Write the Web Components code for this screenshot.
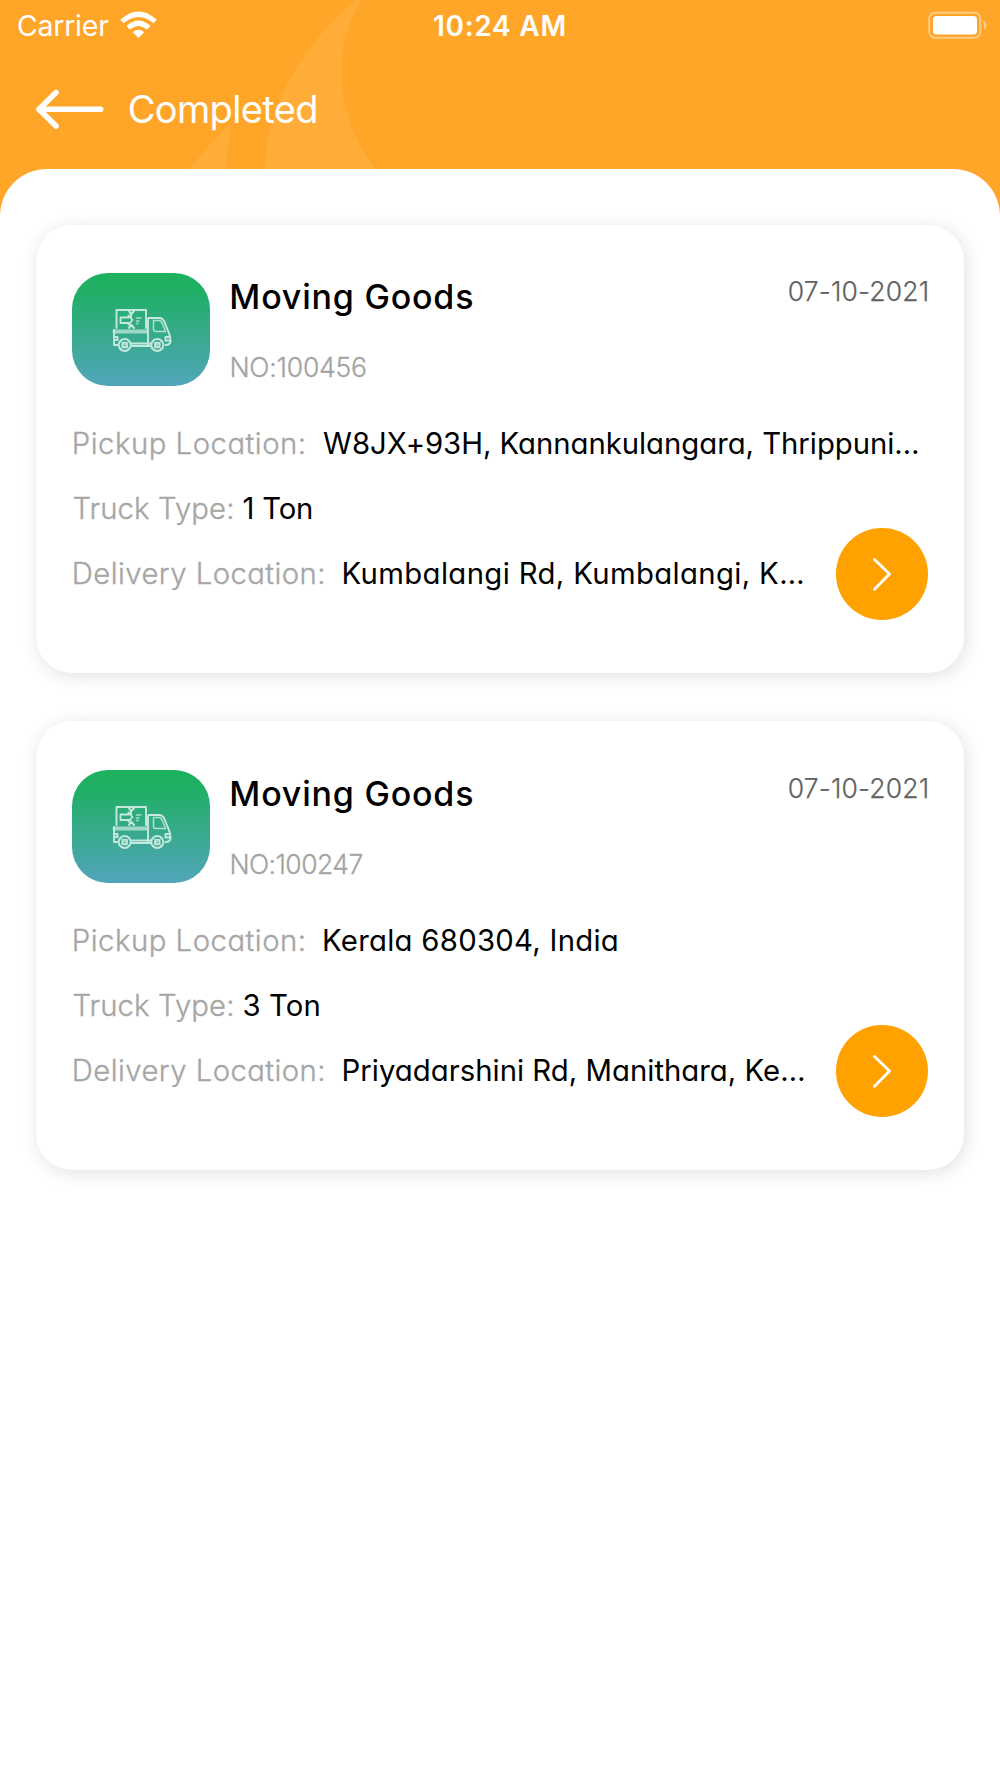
<!DOCTYPE html>
<html lang="en">
<head>
<meta charset="utf-8">
<title>Completed</title>
<style>
html,body{margin:0;background:#fff}
body{font-family:Inter,"Liberation Sans",sans-serif}
</style>
</head>
<body>
<app-screen>
  <status-bar slot="header"></status-bar>
  <nav-bar slot="header" label="Completed" ink="187.5"></nav-bar>
  <order-card name="Moving Goods" number="NO:100456" number-ink="134.5" date="07-10-2021"
    pickup="W8JX+93H, Kannankulangara, Thrippuni…" pickup-ink="595"
    truck="1 Ton" truck-ink="68"
    delivery="Kumbalangi Rd, Kumbalangi, K…" delivery-ink="459.5"></order-card>
  <order-card name="Moving Goods" number="NO:100247" number-ink="131" date="07-10-2021"
    pickup="Kerala 680304, India" pickup-ink="293"
    truck="3 Ton" truck-ink="75.5"
    delivery="Priyadarshini Rd, Manithara, Ke…" delivery-ink="460.5"></order-card>
</app-screen>
<script>
const pen = document.createElement('canvas').getContext('2d');

/* One line of text, tracked so that its glyphs span exactly `ink` pixels. */
class FitText extends HTMLElement {
  connectedCallback() {
    const root = this.attachShadow({mode: 'open'});
    root.innerHTML = `<style>
      :host{display:block;flex:none;white-space:pre}
      span{display:inline-block;font-kerning:normal}
    </style><span></span>`;
    const span = root.querySelector('span');
    const text = this.getAttribute('text');
    const ink = parseFloat(this.getAttribute('ink'));
    span.textContent = text;
    const cs = getComputedStyle(span);
    /* Side bearings are read at ten times the size, since they come back in whole pixels. */
    pen.font = `${cs.fontWeight} ${parseFloat(cs.fontSize) * 10}px ${cs.fontFamily}`;
    const first = pen.measureText(text[0]);
    const last = pen.measureText(text[text.length - 1]);
    const left = -first.actualBoundingBoxLeft / 10;
    const right = (last.width - last.actualBoundingBoxRight) / 10;
    const natural = span.getBoundingClientRect().width - left - right;
    span.style.letterSpacing = (ink - 0.8 - natural) / (text.length - 1) + 'px';
    span.style.marginLeft = -0.55 * left - 0.4 + 'px';
    this.style.width = ink + 'px';
  }
}

class AppScreen extends HTMLElement {
  constructor() {
    super();
    this.attachShadow({mode: 'open'}).innerHTML = `<style>
      :host{display:flex;flex-direction:column;width:1000px;height:1778px;background:#ffa528;overflow:hidden;position:relative}
      .art{position:absolute;left:0;top:0}
      header{position:relative;height:169px;flex:none}
      main{position:relative;flex:1;box-sizing:border-box;background:#fff;border-radius:47px 47px 0 0;padding:55.500px 36px 0;display:flex;flex-direction:column;gap:48.700px}
    </style>
    <svg class="art" width="1000" height="220" viewBox="0 0 1000 220" fill="#ffac38">
      <path d="M356 0H362C346 24 341 50 342 78C343 112 355 141 375 169V180H265C264 153 267 132 276 110C290 70 317 33 356 0Z"/>
      <path d="M189 169C202 153 217 137 231 123C229 138 227 153 226.500 169V180H180Z"/>
    </svg>
    <header><slot name="header"></slot></header>
    <main><slot></slot></main>`;
  }
}

class StatusBar extends HTMLElement {
  constructor() {
    super();
    this.attachShadow({mode: 'open'}).innerHTML = `<style>
      :host{display:grid;grid-template-columns:1fr auto 1fr;height:50px;line-height:51px;font-size:28.500px;color:#fff;padding:0 13px 0 18px}
      .left,.right{display:flex;align-items:center}
      .left{gap:11px}.right{justify-content:flex-end}
      .time{font-size:28px;font-weight:560;transform:translate(-3px,1px)}
      svg{display:block}
      .wifi{margin-top:-3px}.battery{margin-top:-1px}
    </style>
    <div class="left"><fit-text text="Carrier" ink="91"></fit-text>
      <svg class="wifi" width="37" height="27" viewBox="120 10 37 27" fill="#fff">
        <path d="M120.300 18.800Q138.500 2 156.800 18.800L153.300 22.300Q138.500 9.500 123.700 22.300Z"/>
        <path d="M126.500 25Q138.500 14 150.500 25L147 28.500Q138.500 21.500 130 28.500Z"/>
        <path d="M132.800 31.200Q138.500 26.500 144.200 31.200L138.500 36.900Z"/>
      </svg></div>
    <fit-text class="time" text="10:24 AM" ink="131.500"></fit-text>
    <div class="right"><svg class="battery" width="59" height="28" viewBox="928 10 59 28">
        <rect x="929.200" y="11.800" width="51.200" height="25" rx="6" fill="none" stroke="#ffcb83" stroke-width="2"/>
        <rect x="933" y="15" width="44" height="18.500" rx="3.500" fill="#fff"/>
        <path d="M983.700 19.500Q989.500 24.300 983.700 29Z" fill="#ffcb83"/>
      </svg></div>`;
  }
}

class NavBar extends HTMLElement {
  connectedCallback() {
    this.attachShadow({mode: 'open'}).innerHTML = `<style>
      :host{display:flex;align-items:center;height:119px;padding-left:36px;gap:25px;color:#fff;font-size:38px;line-height:119px;font-weight:400}
      svg{display:block;margin-top:-2px}
    </style>
    <svg width="68" height="40" viewBox="36 88.500 68 40" fill="none" stroke="#fff" stroke-width="5.600" stroke-linecap="round" stroke-linejoin="round">
      <path d="M56 92L39 108.700L56 125.500M39 108.700H100.700"/>
    </svg>
    <fit-text text="${this.getAttribute('label')}" ink="${this.getAttribute('ink')}"></fit-text>`;
  }
}

class TruckBadge extends HTMLElement {
  constructor() {
    super();
    this.attachShadow({mode: 'open'}).innerHTML = `<style>
      :host{display:block;flex:none;width:137.500px;height:113.500px;border-radius:36px;background:linear-gradient(#1db15e 0%,#22ae69 20%,#52a5bb 100%)}
      svg{display:block}
    </style>
    <svg width="137.500" height="114" viewBox="72.500 273 137.500 114" fill="none" stroke="#c5e9dd" stroke-width="1.900" stroke-linecap="round" stroke-linejoin="round">
      <path d="M117 328V310H146.500V328"/>
      <path d="M129.500 311L131.500 314.500L134.500 311M131.500 314V317M129.500 328L131.500 324.500L134.500 328" stroke-width="2"/>
      <path d="M121 317.500H129V315.500L133 320L129 324.500V323H121Z" stroke-width="1.800"/>
      <path d="M137 318H141.500M137 321H139.500M137 323.500H138.500" stroke-width="1.500" opacity=".8"/>
      <path d="M115 331.500H147" stroke="#9ed9c8" stroke-width="4"/>
      <path d="M114.500 330V345H118M148.500 319V345M132 343.500H151.500M132 346H151.500"/>
      <path d="M149 318H160Q163 318 165 322L169 332Q171 336 171 341Q171 345 166 345"/>
      <path d="M154 320.500H160Q162 321 163.500 325L166 331.500H156Q154 331.500 154 329.500Z" stroke-width="1.500" opacity=".85"/>
      <path d="M115 337H118V340H115M170 337H166V340.500H171" stroke-width="2"/>
      <circle cx="125.200" cy="345" r="6"/><circle cx="125.200" cy="345" r="2.400"/>
      <circle cx="157.800" cy="345" r="6"/><circle cx="157.800" cy="345" r="2.400"/>
      <path d="M122 342L128.500 348M128.500 342L122 348M154.600 342L161 348M161 342L154.600 348" stroke-width="1.200" opacity=".7"/>
    </svg>`;
  }
}

class RoundButton extends HTMLElement {
  constructor() {
    super();
    this.attachShadow({mode: 'open'}).innerHTML = `<style>
      :host{display:block;width:91.500px;height:91.500px;border-radius:50%;background:#ffa200}
      svg{display:block}
    </style>
    <svg width="91.500" height="91.500" viewBox="0 0 91.500 91.500" fill="none" stroke="#fff" stroke-width="2.800" stroke-linecap="round" stroke-linejoin="round"><path d="M38.500 31.400L53.500 46L38.500 61.200"/></svg>`;
  }
}

class OrderCard extends HTMLElement {
  connectedCallback() {
    const a = n => this.getAttribute(n);
    this.attachShadow({mode: 'open'}).innerHTML = `<style>
      :host{display:block;box-sizing:border-box;height:448.300px;flex:none;border-radius:36px;background:#fff;box-shadow:2px 3px 18px rgba(0,0,0,.12);padding:48.200px 36.500px 0 36.200px;font-feature-settings:"cv11"}
      .head{display:flex;height:114px;margin-bottom:24px}
      .names{padding:4.500px 0 0 21.500px;flex:1}
      .title{font-size:34px;line-height:40px;font-weight:500;color:#000;margin-bottom:35px}
      .number{font-size:26.500px;line-height:30px;font-weight:300;color:#a3a3a3;-webkit-text-stroke:.3px #a3a3a3}
      .date{font-size:26.500px;line-height:30px;font-weight:300;color:#626262;-webkit-text-stroke:.25px #626262;padding-top:3px}
      .row{display:flex;height:65.200px;line-height:65.200px;font-size:29.300px;padding-left:1.500px}
      .label{color:#a6a6a6;font-weight:300;-webkit-text-stroke:.35px #a6a6a6}
      .value{color:#000;font-weight:400}
      .wide{gap:20px}.tight{gap:11px}
      .foot{display:flex;justify-content:space-between}
      round-button{margin-top:-13px}
    </style>
    <div class="head">
      <truck-badge></truck-badge>
      <div class="names">
        <fit-text class="title" text="${a('name')}" ink="241"></fit-text>
        <fit-text class="number" text="${a('number')}" ink="${a('number-ink')}"></fit-text>
      </div>
      <fit-text class="date" text="${a('date')}" ink="138.500"></fit-text>
    </div>
    <div class="row wide">
      <fit-text class="label" text="Pickup Location:" ink="230"></fit-text>
      <fit-text class="value" text="${a('pickup')}" ink="${a('pickup-ink')}"></fit-text>
    </div>
    <div class="row tight">
      <fit-text class="label" text="Truck Type:" ink="159"></fit-text>
      <fit-text class="value" text="${a('truck')}" ink="${a('truck-ink')}"></fit-text>
    </div>
    <div class="foot">
      <div class="row wide">
        <fit-text class="label" text="Delivery Location:" ink="249.500"></fit-text>
        <fit-text class="value" text="${a('delivery')}" ink="${a('delivery-ink')}"></fit-text>
      </div>
      <round-button></round-button>
    </div>`;
  }
}

customElements.define('fit-text', FitText);
customElements.define('truck-badge', TruckBadge);
customElements.define('round-button', RoundButton);
customElements.define('status-bar', StatusBar);
customElements.define('nav-bar', NavBar);
customElements.define('order-card', OrderCard);
customElements.define('app-screen', AppScreen);
</script>
</body>
</html>
